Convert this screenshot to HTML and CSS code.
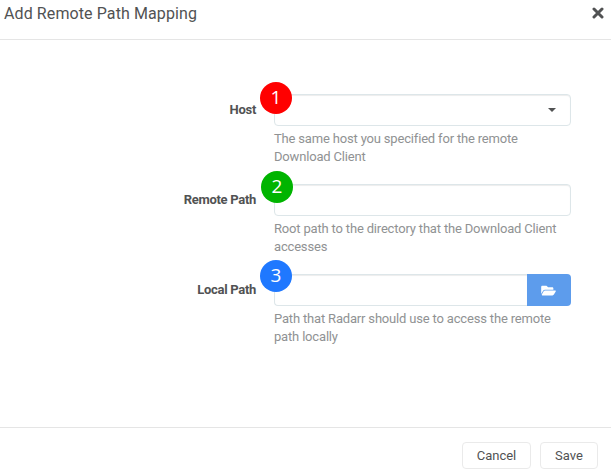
FILE: index.html
```html
<!DOCTYPE html>
<html lang="en">
<head>
<meta charset="utf-8">
<title>Add Remote Path Mapping</title>
<link rel="stylesheet" href="styles.css">
</head>
<body>
<div class="modal">
  <header class="modal-header">
    <h1 class="title">Add Remote Path Mapping</h1>
    <svg class="close" viewBox="0 0 12 12" role="img" aria-label="Close"><path d="M2 2 10 10M10 2 2 10"/></svg>
  </header>
  <main class="modal-body">
    <div class="form-group">
      <div class="label">Host</div>
      <div class="field">
        <div class="input select"><svg class="caret" viewBox="0 0 8 4"><path d="M0 0h8L4 4z"/></svg></div>
        <p class="help">The same host you specified for the remote Download Client</p>
        <span class="badge badge-red">1</span>
      </div>
    </div>
    <div class="form-group">
      <div class="label">Remote Path</div>
      <div class="field">
        <div class="input"></div>
        <p class="help">Root path to the directory that the Download Client accesses</p>
        <span class="badge badge-green">2</span>
      </div>
    </div>
    <div class="form-group">
      <div class="label">Local Path</div>
      <div class="field">
        <div class="input-row">
          <div class="input input-joined"></div>
          <div class="browse"><svg class="folder" viewBox="0 0 576 512"><path d="M572.7 292.100 500.300 416.200A64 64 0 0 1 445 448H45c-18.500 0-30-20-20.700-36l72.400-124.200A64 64 0 0 1 152 256h400c18.500 0 30 20 20.700 36.100zM152 224h328v-48c0-26.500-21.500-48-48-48H272l-64-64H48C21.500 64 0 85.500 0 112v278l69.100-118.400A96.500 96.500 0 0 1 152 224z"/></svg></div>
        </div>
        <p class="help">Path that Radarr should use to access the remote path locally</p>
        <span class="badge badge-blue">3</span>
      </div>
    </div>
  </main>
  <footer class="modal-footer">
    <div class="button cancel">Cancel</div>
    <div class="button save">Save</div>
  </footer>
</div>
</body>
</html>
```

FILE: styles.css
```css
* { box-sizing: border-box; }
body {
  margin: 0;
  background: #fff;
  color: #515253;
  font-family: Roboto, "Liberation Sans", sans-serif;
  font-size: 13px;
}
.modal { display: flex; flex-direction: column; height: 475px; overflow: hidden; }
.modal-header {
  display: flex;
  justify-content: space-between;
  height: 40px;
  padding: 3px 7px 0 4px;
  border-bottom: 1px solid #e5e5e5;
}
.title { margin: 0; font-size: 16px; line-height: 22px; font-weight: 400; letter-spacing: 0.1px; white-space: nowrap; }
.close { width: 12px; height: 12px; margin-top: 4px; fill: none; stroke: #515253; stroke-width: 3; stroke-linecap: round; }
.modal-body { flex: 1; padding-top: 54px; }
.form-group { display: flex; gap: 18px; height: 90px; }
.label { width: 256px; text-align: right; font-weight: 700; line-height: 32px; letter-spacing: -0.3px; }
.field { position: relative; width: 297px; }
.input {
  height: 32px;
  border: 1px solid #dde6e9;
  border-radius: 4px;
  box-shadow: inset 0 1px 1px rgba(0, 0, 0, 0.075);
}
.select { display: flex; align-items: center; justify-content: flex-end; padding-right: 14px; }
.caret { width: 8px; height: 4px; fill: #515253; }
.input-row { display: flex; }
.input-joined { flex: 1; border-right: 0; border-radius: 4px 0 0 4px; }
.browse {
  display: flex;
  align-items: center;
  justify-content: center;
  width: 44px;
  border-radius: 0 4px 4px 0;
  background: #5d9cec;
}
.folder { width: 15px; height: 13px; margin-right: 1px; fill: #fff; }
.help { margin: 4px 0 0; color: #909293; line-height: 18px; letter-spacing: -0.175px; }
.badge {
  position: absolute;
  left: -14.5px;
  top: -12.5px;
  width: 32px;
  height: 32px;
  padding-left: 1px;
  border-radius: 50%;
  color: #fff;
  font-family: "Open Sans", sans-serif;
  font-size: 19px;
  font-weight: 500;
  line-height: 30px;
  text-align: center;
}
.badge-red { background: #f00; }
.badge-green { left: -13.5px; top: -13.5px; background: #00b400; }
.badge-blue { top: -14.5px; background: #1f78ff; }
.modal-footer {
  display: flex;
  justify-content: flex-end;
  gap: 9px;
  height: 48px;
  padding: 14px 13px 0 0;
  border-top: 1px solid #e5e5e5;
}
.button { height: 27px; border: 1px solid #eaeaea; border-radius: 4px; line-height: 25px; text-align: center; }
.cancel { width: 69px; }
.save { width: 58px; }
```
